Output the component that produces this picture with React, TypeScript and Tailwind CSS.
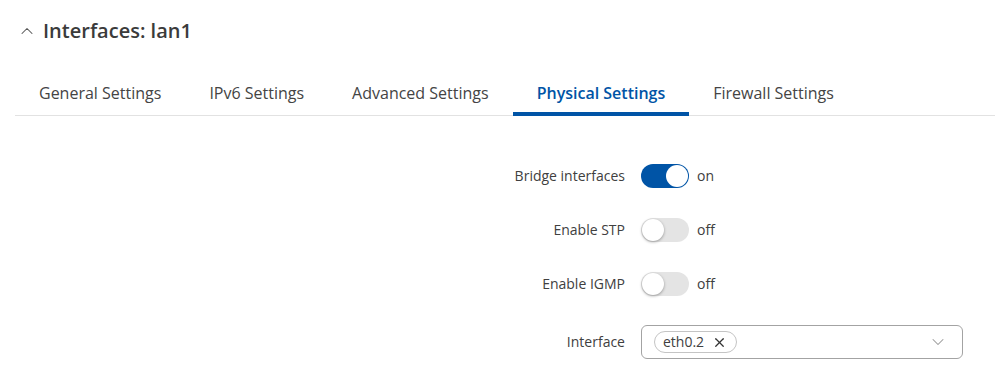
import { ChevronDown, ChevronUp, X } from "lucide-react";

const tabs = [
  "General Settings",
  "IPv6 Settings",
  "Advanced Settings",
  "Physical Settings",
  "Firewall Settings",
];

function Toggle({ on }: { on: boolean }) {
  return (
    <div className="flex items-center gap-2">
      <div
        className={`relative w-[48px] h-6 rounded-full ${
          on ? "bg-[#0054a6]" : "bg-[#e4e4e4]"
        }`}
      >
        <div
          className={`absolute top-px w-[22px] h-[22px] rounded-full bg-white ${
            on ? "right-px" : "left-px shadow-[0_1px_3px_rgba(0,0,0,0.35)]"
          }`}
        />
      </div>
      <span className="text-sm text-[#404040]">{on ? "on" : "off"}</span>
    </div>
  );
}

function Row({
  label,
  children,
  className = "",
}: {
  label: string;
  children: React.ReactNode;
  className?: string;
}) {
  return (
    <div className={`flex items-center gap-4 ${className}`}>
      <div className="w-[610px] text-right text-sm text-[#404040]">{label}</div>
      {children}
    </div>
  );
}

export default function App() {
  const active = "Physical Settings";

  return (
    <div className="w-[995px] h-[392px] bg-white overflow-hidden font-['Open_Sans',sans-serif]">
      <div className="flex items-center gap-[6px] pl-[17px] pt-[18px] h-[44px]">
        <ChevronUp size={20} strokeWidth={1.25} className="text-[#555]" />
        <h2 className="text-[20px] leading-[26px] font-semibold text-[#3b3b3b]">
          Interfaces: lan1
        </h2>
      </div>

      <div className="ml-[15px] mt-[27px] flex border-b border-[#e2e2e2]">
        {tabs.map((t) => (
          <div
            key={t}
            className={`px-6 h-[45px] -mb-px pt-[10px] text-base ${
              t === active
                ? "border-b-4 border-[#0054a6] text-[#0054a6] font-semibold"
                : "text-[#444]"
            }`}
          >
            {t}
          </div>
        ))}
      </div>

      <div className="ml-[15px] pt-[48px] flex flex-col gap-[30px]">
        <Row label="Bridge interfaces">
          <Toggle on />
        </Row>
        <Row label="Enable STP">
          <Toggle on={false} />
        </Row>
        <Row label="Enable IGMP">
          <Toggle on={false} />
        </Row>
        <Row label="Interface" className="-mt-[1px]">
          <div className="w-[322px] h-[34px] border border-[#a3a3a3] rounded-md flex items-center justify-between pl-3 pr-[14px]">
            <div className="flex items-center gap-2 h-[22px] border border-[#c4c4c4] rounded-full pl-2 pr-[9px] text-sm text-[#404040]">
              eth0.2
              <X size={15} strokeWidth={2} className="text-[#333]" />
            </div>
            <ChevronDown size={20} strokeWidth={1.25} className="text-[#999]" />
          </div>
        </Row>
      </div>
    </div>
  );
}
